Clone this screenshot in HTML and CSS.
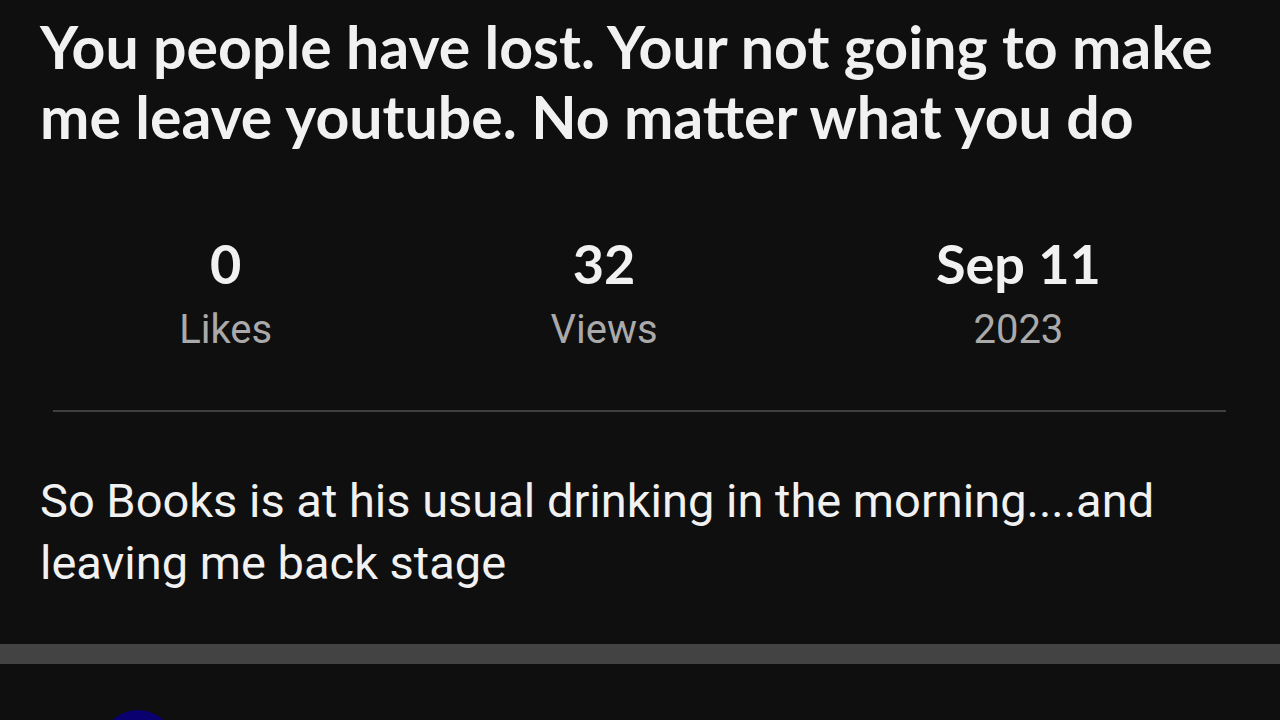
FILE: index.html
```html
<!DOCTYPE html>
<html lang="en">
<head>
<meta charset="utf-8">
<title>Post</title>
<link rel="stylesheet" href="styles.css">
</head>
<body>
<main class="page">
  <section class="post">
    <h1 class="title">You people have lost. Your not going to make me leave youtube. No matter what you do</h1>
    <div class="stats">
      <div class="stat"><div class="stat-value">0</div><div class="stat-label">Likes</div></div>
      <div class="stat"><div class="stat-value">32</div><div class="stat-label">Views</div></div>
      <div class="stat"><div class="stat-value">Sep 11</div><div class="stat-label">2023</div></div>
    </div>
    <hr class="divider">
    <p class="desc">So Books is at his usual drinking in the morning....and leaving me back stage</p>
  </section>
  <div class="band"></div>
  <section class="channel">
    <div class="avatar"></div>
  </section>
</main>
</body>
</html>
```
FILE: styles.css
```css
html, body {
  margin: 0;
  padding: 0;
  background: #0f0f0f;
  height: 100%;
  overflow: hidden;
}
.page {
  display: flex;
  flex-direction: column;
}
.post {
  padding: 12px 40px 0 40px;
}
.title {
  margin: 0;
  font-family: "Lato", "Open Sans", sans-serif;
  font-weight: 700;
  font-size: 59px;
  line-height: 70px;
  color: #f1f1f1;
}
.stats {
  display: flex;
  justify-content: space-around;
  margin-top: 84px;
}
.stat {
  display: flex;
  flex-direction: column;
  align-items: center;
}
.stat-value {
  font-family: "Lato", "Open Sans", sans-serif;
  font-weight: 700;
  font-size: 54px;
  line-height: 56px;
  color: #f1f1f1;
}
.stat-label {
  font-family: "Roboto", sans-serif;
  font-size: 40px;
  line-height: 50px;
  margin-top: 13px;
  color: #aaaaaa;
}
.divider {
  border: 0;
  height: 2px;
  background: #3f3f3f;
  margin: 55px 14px 0 13px;
}
.desc {
  margin: 58px 0 0 0;
  font-family: "Roboto", sans-serif;
  font-size: 47px;
  line-height: 62px;
  color: #f1f1f1;
}
.band {
  height: 20px;
  background: #434343;
  margin-top: 50px;
}
.channel {
  padding: 46px 40px 0 100px;
}
.avatar {
  width: 76px;
  height: 76px;
  border-radius: 50%;
  background: #0a0070;
}
```
